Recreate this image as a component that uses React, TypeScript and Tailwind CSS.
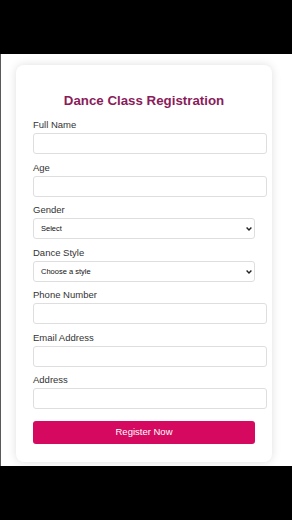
import { useState } from "react";

const textFields = ["Phone Number", "Email Address", "Address"];

const Chevron = () => (
  <svg
    width="6"
    height="4"
    viewBox="0 0 6 4"
    className="pointer-events-none absolute right-[3px] top-[9px]"
  >
    <path d="M0.6 0.6 3 3 5.4 0.6" stroke="#222" strokeWidth="1.4" fill="none" />
  </svg>
);

const Field = ({ label }: { label: string }) => (
  <div className="mb-[7.5px] flex flex-col">
    <label className="mb-[2px] text-[9.5px] leading-[12px] text-[#333]">{label}</label>
    <input
      type="text"
      className="block h-[21px] w-[234px] rounded-[3px] border border-[#dedede] bg-white px-[5px] text-[9px] outline-none"
    />
  </div>
);

const SelectField = ({
  label,
  options,
  value,
  onChange,
}: {
  label: string;
  options: string[];
  value: string;
  onChange: (v: string) => void;
}) => (
  <div className="mb-[7.5px] flex flex-col">
    <label className="mb-[2px] text-[9.5px] leading-[12px] text-[#333]">{label}</label>
    <div className="relative h-[21px] w-full">
      <select
        value={value}
        onChange={(e) => onChange(e.target.value)}
        className="block h-[21px] w-full appearance-none rounded-[3px] border border-[#dedede] bg-white pl-[7px] text-[7.5px] leading-[19px] text-[#111] outline-none"
      >
        {options.map((o) => (
          <option key={o}>{o}</option>
        ))}
      </select>
      <Chevron />
    </div>
  </div>
);

export default function App() {
  const [gender, setGender] = useState("Select");
  const [style, setStyle] = useState("Choose a style");

  return (
    <div
      className="flex h-[520px] w-[292px] flex-col bg-black"
      style={{ fontFamily: '"Liberation Sans", Arial, sans-serif' }}
    >
      <div className="h-[54px] bg-black" />
      <div className="flex h-[412px] flex-col border-l border-[#5a5a5a] bg-white">
        <div className="ml-[15px] mt-[11px] w-[256px] rounded-[8px] bg-white px-[17px] pb-[18px] pt-[28px] shadow-[0_0_10px_rgba(0,0,0,0.13)]">
          <h1 className="mb-[10px] text-center text-[13.3px] font-bold leading-[16px] text-[#8a1c5b]">
            Dance Class Registration
          </h1>
          <form className="flex flex-col" onSubmit={(e) => e.preventDefault()}>
            <Field label="Full Name" />
            <Field label="Age" />
            <SelectField
              label="Gender"
              options={["Select", "Female", "Male", "Other"]}
              value={gender}
              onChange={setGender}
            />
            <SelectField
              label="Dance Style"
              options={["Choose a style", "Ballet", "Hip Hop", "Salsa", "Contemporary"]}
              value={style}
              onChange={setStyle}
            />
            {textFields.map((f) => (
              <Field key={f} label={f} />
            ))}
            <button
              type="submit"
              className="mt-[4.5px] h-[23px] w-full rounded-[3px] bg-[#d4095f] text-[9.5px] text-white"
            >
              Register Now
            </button>
          </form>
        </div>
      </div>
      <div className="flex-1 bg-black" />
    </div>
  );
}
